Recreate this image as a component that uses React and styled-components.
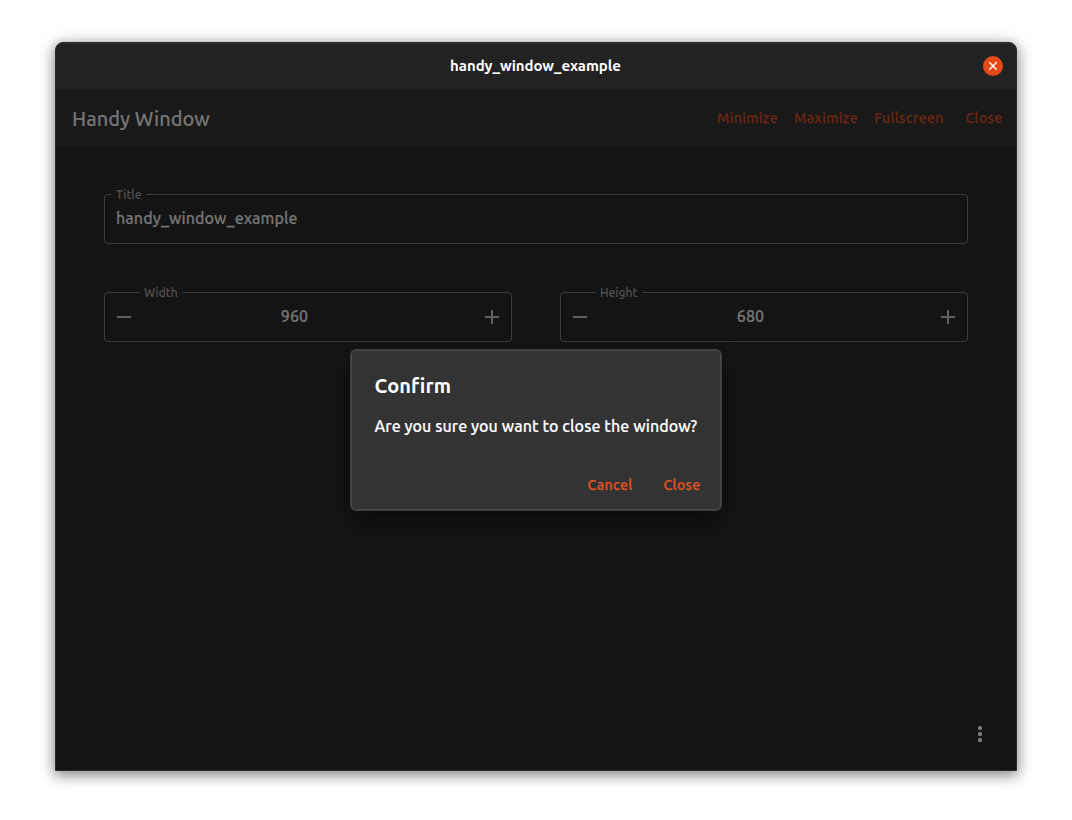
import React from 'react';
import styled, { createGlobalStyle } from 'styled-components';

const GlobalStyle = createGlobalStyle`
  * { box-sizing: border-box; }
  body {
    margin: 0;
    background: #fff;
    font-family: Ubuntu, "Noto Sans", sans-serif;
    overflow: hidden;
  }
`;

const Desktop = styled.main`
  width: 1072px;
  height: 820px;
  padding: 42px 55px 49px;
`;

const Window = styled.section`
  position: relative;
  display: flex;
  flex-direction: column;
  height: 729px;
  border: 1px solid #2b2b2d;
  border-radius: 8px 8px 0 0;
  background: #141414;
  box-shadow: 0 3px 14px 1px rgba(0, 0, 0, 0.5);
`;

const TitleBar = styled.header`
  display: grid;
  grid-template-columns: 1fr auto 1fr;
  align-items: center;
  height: 46px;
  padding: 0 13px;
  border-radius: 7px 7px 0 0;
  background: #222;
  box-shadow: inset 0 1px #2f2f2f;
`;

const WindowTitle = styled.h1`
  grid-column: 2;
  margin: 0 1px 0 0;
  color: #fff;
  font-size: 15px;
  line-height: 20px;
  font-weight: 700;
  letter-spacing: -0.04px;
`;

const CloseCircle = styled.button`
  justify-self: end;
  display: flex;
  width: 20px;
  height: 20px;
  padding: 0;
  border: 0;
  border-radius: 50%;
  background: #e34a16;
`;

const AppBar = styled.nav`
  display: flex;
  align-items: center;
  justify-content: space-between;
  height: 57px;
  padding: 0 0 0 16px;
  background: #191919;
`;

const AppTitle = styled.h2`
  margin: 2px 0 0;
  color: #757575;
  font-size: 20px;
  line-height: 28px;
  font-weight: 500;
  -webkit-text-stroke: 0.12px;
`;

const Actions = styled.div`
  display: flex;
  justify-content: flex-end;
  gap: ${(p) => p.$gap || 0}px;
`;

const TextButton = styled.button`
  width: ${(p) => p.$width}px;
  height: 36px;
  padding: 0;
  border: 0;
  background: none;
  color: ${(p) => (p.$dimmed ? '#682712' : '#e0531f')};
  font: 500 14px/20px Ubuntu, "Noto Sans", sans-serif;
  letter-spacing: 0.4px;
  -webkit-text-stroke: 0.25px;
  white-space: nowrap;
`;

const Form = styled.div`
  display: grid;
  grid-template-columns: 1fr 1fr;
  gap: 48px;
  padding: 48px 48px 0;
`;

const Field = styled.div`
  position: relative;
  grid-column: ${(p) => (p.$wide ? '1 / -1' : 'auto')};
  display: flex;
  align-items: center;
  justify-content: space-between;
  height: 50px;
  padding: 0 11px;
  border: 1px solid #3a3a3a;
  border-radius: 4px;
  color: #757575;
`;

const Label = styled.label`
  position: absolute;
  top: -9px;
  left: ${(p) => p.$left}px;
  width: ${(p) => p.$width}px;
  padding-left: 4px;
  background: #141414;
  color: #505050;
  font-size: 12px;
  line-height: 17px;
  font-weight: 500;
  letter-spacing: 0.05px;
  -webkit-text-stroke: 0.12px;
`;

const Value = styled.span`
  margin-bottom: 2px;
  font-size: 16px;
  line-height: 22px;
  font-weight: 500;
  letter-spacing: 0.1px;
  -webkit-text-stroke: 0.2px;
`;

const NumberValue = styled(Value)`
  flex: 1;
  margin-right: 27px;
  text-align: center;
`;

const Glyph = styled.svg`
  display: block;
  flex: none;
`;

const Menu = styled.div`
  display: flex;
  flex-direction: column;
  align-self: flex-end;
  gap: 2px;
  margin: auto 34px 28px;
`;

const Dot = styled.i`
  width: 4px;
  height: 4px;
  border-radius: 1.5px;
  background: #7b7b7b;
`;

const Dialog = styled.div`
  position: absolute;
  top: 307px;
  left: 295px;
  width: 370px;
  height: 160px;
  padding: 22px 6px 6px 22.5px;
  border: 1px solid #474747;
  border-radius: 5px;
  background: #333;
  box-shadow: 0 0 0 1px #3c3c3c, 0 11px 15px -7px rgba(0, 0, 0, 0.2), 0 12px 24px 3px rgba(0, 0, 0, 0.25);
  color: #fff;
`;

const DialogTitle = styled.h3`
  margin: 0;
  font-size: 20px;
  line-height: 26px;
  font-weight: 600;
  letter-spacing: 0.08px;
`;

const Message = styled.p`
  margin: 16px 0 30px;
  font-size: 16px;
  line-height: 22px;
  font-weight: 500;
  letter-spacing: 0.08px;
  -webkit-text-stroke: 0.15px;
  white-space: nowrap;
`;

const Step = ({ plus }) => (
  <Glyph width="16" height="16" viewBox="0 0 16 16" fill="#606060">
    <rect x="1" y="7" width="14" height="2" />
    {plus && <rect x="7" y="1" width="2" height="14" />}
  </Glyph>
);

const NumberField = ({ label, width, value }) => (
  <Field>
    <Label $left={35} $width={width}>{label}</Label>
    <Step />
    <NumberValue>{value}</NumberValue>
    <Step plus />
  </Field>
);

export default function App() {
  return (
    <Desktop>
      <GlobalStyle />
      <Window>
        <TitleBar>
          <WindowTitle>handy_window_example</WindowTitle>
          <CloseCircle aria-label="Close window">
            <Glyph width="20" height="20" viewBox="0 0 20 20" stroke="#fff" strokeWidth="1.4">
              <path d="M6.3 6.3l7.4 7.4M13.7 6.3l-7.4 7.4" />
            </Glyph>
          </CloseCircle>
        </TitleBar>
        <AppBar>
          <AppTitle>Handy Window</AppTitle>
          <Actions>
            <TextButton $dimmed $width={77}>Minimize</TextButton>
            <TextButton $dimmed $width={80}>Maximize</TextButton>
            <TextButton $dimmed $width={86}>Fullscreen</TextButton>
            <TextButton $dimmed $width={64}>Close</TextButton>
          </Actions>
        </AppBar>
        <Form>
          <Field $wide>
            <Label $left={7} $width={34}>Title</Label>
            <Value>handy_window_example</Value>
          </Field>
          <NumberField label="Width" width={42} value="960" />
          <NumberField label="Height" width={46} value="680" />
        </Form>
        <Menu>
          <Dot />
          <Dot />
          <Dot />
        </Menu>
        <Dialog role="dialog">
          <DialogTitle>Confirm</DialogTitle>
          <Message>Are you sure you want to close the window?</Message>
          <Actions $gap={8}>
            <TextButton $width={64}>Cancel</TextButton>
            <TextButton $width={64}>Close</TextButton>
          </Actions>
        </Dialog>
      </Window>
    </Desktop>
  );
}
